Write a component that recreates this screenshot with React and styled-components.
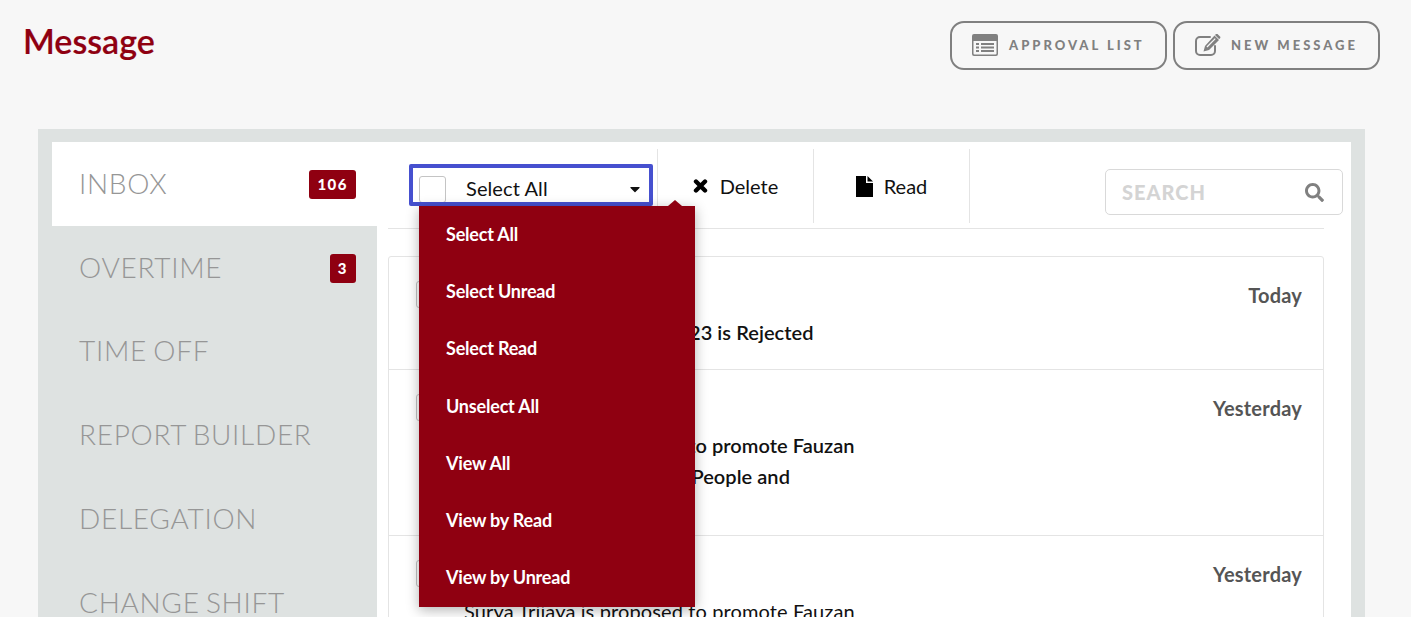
import React from "react";
import styled, { createGlobalStyle } from "styled-components";
import { FaSearch, FaCaretDown } from "react-icons/fa";

const GlobalStyle = createGlobalStyle`
  html, body {
    margin: 0;
    height: 100%;
    overflow: hidden;
    background: #f7f7f7;
    font-family: "Lato", "Liberation Sans", sans-serif;
  }
  * { box-sizing: border-box; }
`;

const Page = styled.div`
  height: 617px;
  overflow: hidden;
`;

const Header = styled.header`
  height: 129px;
  padding: 20px 31px 0 23px;
  display: flex;
  justify-content: space-between;
  align-items: flex-start;
`;

const Title = styled.h1`
  margin: 0;
  font-size: 34px;
  line-height: 42px;
  font-weight: 600;
  color: #8f0011;
  -webkit-text-stroke: 0.2px #8f0011;
`;

const HeaderActions = styled.div`
  margin-top: 1px;
  display: flex;
  gap: 6px;
`;

const HeaderButton = styled.button`
  height: 49px;
  width: ${({ $width }) => $width}px;
  padding: 0 0 2px 20px;
  display: flex;
  align-items: center;
  gap: ${({ $gap }) => $gap}px;
  background: transparent;
  border: 2px solid #808080;
  border-radius: 14px;
  color: #808080;
  font-family: inherit;
  font-size: 13px;
  font-weight: 900;
  letter-spacing: 3px;
  svg { flex: none; }
`;

const Panel = styled.main`
  margin: 0 46px 0 38px;
  padding: 13px 14px 0;
  background: #dee2e1;
  height: 488px;
`;

const Inner = styled.div`
  display: flex;
  background: #fff;
  height: 475px;
`;

const Sidebar = styled.nav`
  width: 325px;
  flex: none;
  background: #dee2e1;
`;

const NavItem = styled.div`
  height: 83.8px;
  padding: 0 21px 2px 27px;
  display: flex;
  align-items: center;
  justify-content: space-between;
  background: ${({ $active }) => ($active ? "#fff" : "transparent")};
  font-size: 28px;
  font-weight: 300;
  letter-spacing: 0.7px;
  word-spacing: -2px;
  color: #969696;
`;

const Badge = styled.span`
  margin-top: 3px;
  padding: 0 8px;
  height: 29px;
  line-height: 29px;
  border-radius: 3px;
  background: #8f0011;
  color: #fff;
  font-size: 15px;
  font-weight: 900;
  letter-spacing: 1.5px;
`;

const Content = styled.section`
  flex: 1;
  min-width: 0;
  padding: 0 8px 0 11px;
`;

const Toolbar = styled.div`
  position: relative;
  height: 86px;
  padding: 7px 0 0 21px;
  display: flex;
  align-items: flex-start;
`;

const SelectBox = styled.div`
  margin-top: 15px;
  width: 244px;
  height: 42px;
  padding: 8px 6px 0 6px;
  display: flex;
  align-items: flex-start;
  overflow: hidden;
  border: 4px solid #4650cf;
  border-radius: 2px;
  font-size: 20px;
  line-height: 24px;
  letter-spacing: 0.1px;
  color: #111;
`;

const Check = styled.span`
  flex: none;
  width: 27px;
  height: 27px;
  background: #fff;
  border: 1px solid #c4c4c4;
  border-radius: 3px;
`;

const SelectLabel = styled.span`
  flex: 1;
  margin-left: 20px;
`;

const Action = styled.div`
  width: ${({ $last }) => ($last ? 157 : 156)}px;
  height: 74px;
  margin-left: ${({ $first }) => ($first ? "4px" : "0")};
  display: flex;
  align-items: center;
  justify-content: center;
  gap: ${({ $gap }) => $gap}px;
  border-left: 1px solid #e4e4e4;
  border-right: ${({ $last }) => ($last ? "1px solid #e4e4e4" : "none")};
  font-size: 20px;
  color: #111;
  svg { flex: none; }
`;

const Search = styled.div`
  margin: 20px 0 0 auto;
  width: 238px;
  height: 46px;
  padding: 0 18px 0 16px;
  display: flex;
  align-items: center;
  justify-content: space-between;
  border: 1px solid #d9d9d9;
  border-radius: 5px;
  color: #808080;
`;

const SearchHint = styled.span`
  font-size: 20px;
  font-weight: 900;
  letter-spacing: 1px;
  color: #d4d4d4;
`;

const Rule = styled.div`
  height: 1px;
  margin: 0 19px 27px 0;
  background: #e4e4e4;
`;

const MessageList = styled.div`
  margin-right: 19px;
  border: 1px solid #e4e4e4;
  border-radius: 3px;
`;

const MessageRow = styled.article`
  height: ${({ $height }) => $height}px;
  padding: 24px 21px 0 27px;
  display: flex;
  gap: 21px;
  border-top: ${({ $first }) => ($first ? "none" : "1px solid #e4e4e4")};
`;

const MessageBody = styled.div`
  flex: 1;
  min-width: 0;
`;

const MessageHead = styled.div`
  display: flex;
  justify-content: space-between;
  height: 36px;
  padding-top: 1px;
  font-size: 20px;
  line-height: 26px;
  font-weight: 700;
  letter-spacing: 0.2px;
  color: #555;
`;

const MessageText = styled.p`
  margin: 0;
  width: 400px;
  font-size: 20px;
  line-height: 31px;
  font-weight: ${({ $read }) => ($read ? 400 : 600)};
  letter-spacing: ${({ $read }) => ($read ? "0.12px" : "0.05px")};
  color: #111;
`;

const Menu = styled.ul`
  position: absolute;
  z-index: 2;
  left: 31px;
  top: 64px;
  width: 276px;
  height: 401px;
  margin: 0;
  padding: 0;
  list-style: none;
  background: #8f0011;
  box-shadow: 0 3px 12px rgba(0, 0, 0, 0.3);
  &::before {
    content: "";
    position: absolute;
    right: 13px;
    top: -6px;
    border-left: 7px solid transparent;
    border-right: 7px solid transparent;
    border-bottom: 6px solid #8f0011;
  }
`;

const MenuItem = styled.li`
  height: 57.3px;
  padding: 0 0 2px 27px;
  display: flex;
  align-items: center;
  color: #fff;
  font-size: 18px;
  font-weight: 700;
  letter-spacing: -0.2px;
`;

const ListIcon = () => (
  <svg width="26" height="22" viewBox="0 0 26 22">
    <path fill="currentColor" fillRule="evenodd" d="M2 0h22a2 2 0 0 1 2 2v18a2 2 0 0 1-2 2H2a2 2 0 0 1-2-2V2a2 2 0 0 1 2-2zM1.500 7v12.500a1 1 0 0 0 1 1h21a1 1 0 0 0 1-1V7z" />
    <path fill="currentColor" d="M4 9h3v2H4zM9 9h13v2H9zM4 12.500h3v2H4zM9 12.500h13v2H9zM4 16h3v2H4zM9 16h13v2H9z" />
  </svg>
);

const EditIcon = () => (
  <svg width="26" height="22" viewBox="0 0 26 22">
    <path fill="none" stroke="currentColor" strokeWidth="2" strokeLinecap="round" d="M15 3H5a4 4 0 0 0-4 4v10a4 4 0 0 0 4 4h11a4 4 0 0 0 4-4v-5" />
    <path fill="currentColor" d="M19.500 1.500 24 6 14 16l-5.500 1.500L10 12zM21 0l1-.5 3.500 3.500-.5 1.500-1 .5L20 1z" />
    <path fill="#f7f7f7" d="M11.500 12.500 19.800 4.200l.9.9-8.300 8.300z" />
  </svg>
);

const DeleteIcon = () => (
  <svg width="15" height="14" viewBox="0 0 15 14">
    <path fill="none" stroke="#000" strokeWidth="4.400" strokeLinecap="round" d="M3 2.500l9 9m0-9l-9 9" />
  </svg>
);

const FileIcon = () => (
  <svg width="17" height="21" viewBox="0 0 17 21">
    <path fill="#000" d="M0 0h10v7h7v14H0z" />
    <path fill="#000" d="M11.500 0 17 5.500h-5.500z" />
  </svg>
);

const navItems = [
  { label: "INBOX", count: 106, active: true },
  { label: "OVERTIME", count: 3 },
  { label: "TIME OFF" },
  { label: "REPORT BUILDER" },
  { label: "DELEGATION" },
  { label: "CHANGE SHIFT" },
];

const menuItems = [
  "Select All",
  "Select Unread",
  "Select Read",
  "Unselect All",
  "View All",
  "View by Read",
  "View by Unread",
];

const messages = [
  {
    height: 112,
    date: "Today",
    name: "Overtime",
    lines: ["Your request overtime #123 is Rejected"],
  },
  {
    height: 166,
    date: "Yesterday",
    name: "Promotion",
    lines: ["Surya Trijaya is proposed to promote Fauzan", "Hakim Wijaya as Head of People and", "Culture"],
  },
  {
    height: 160,
    date: "Yesterday",
    name: "Promotion",
    read: true,
    lines: ["Surya Trijaya is proposed to promote Fauzan"],
  },
];

function App() {
  return (
    <Page>
      <GlobalStyle />
      <Header>
        <Title>Message</Title>
        <HeaderActions>
          <HeaderButton $width={217} $gap={11}>
            <ListIcon />
            APPROVAL LIST
          </HeaderButton>
          <HeaderButton $width={207} $gap={10}>
            <EditIcon />
            NEW MESSAGE
          </HeaderButton>
        </HeaderActions>
      </Header>
      <Panel>
        <Inner>
          <Sidebar>
            {navItems.map(item => (
              <NavItem key={item.label} $active={item.active}>
                {item.label}
                {item.count && <Badge>{item.count}</Badge>}
              </NavItem>
            ))}
          </Sidebar>
          <Content>
            <Toolbar>
              <SelectBox>
                <Check />
                <SelectLabel>Select All</SelectLabel>
                <FaCaretDown size={16} style={{ marginTop: 5 }} />
              </SelectBox>
              <Action $first $gap={12}>
                <DeleteIcon />
                Delete
              </Action>
              <Action $last $gap={11}>
                <FileIcon />
                Read
              </Action>
              <Search>
                <SearchHint>SEARCH</SearchHint>
                <FaSearch size={19} />
              </Search>
              <Menu>
                {menuItems.map(item => (
                  <MenuItem key={item}>{item}</MenuItem>
                ))}
              </Menu>
            </Toolbar>
            <Rule />
            <MessageList>
              {messages.map((message, i) => (
                <MessageRow key={i} $first={i === 0} $height={message.height}>
                  <Check />
                  <MessageBody>
                    <MessageHead>
                      <span>{message.name}</span>
                      <span>{message.date}</span>
                    </MessageHead>
                    {message.lines.map(line => (
                      <MessageText key={line} $read={message.read}>{line}</MessageText>
                    ))}
                  </MessageBody>
                </MessageRow>
              ))}
            </MessageList>
          </Content>
        </Inner>
      </Panel>
    </Page>
  );
}

export default App;
